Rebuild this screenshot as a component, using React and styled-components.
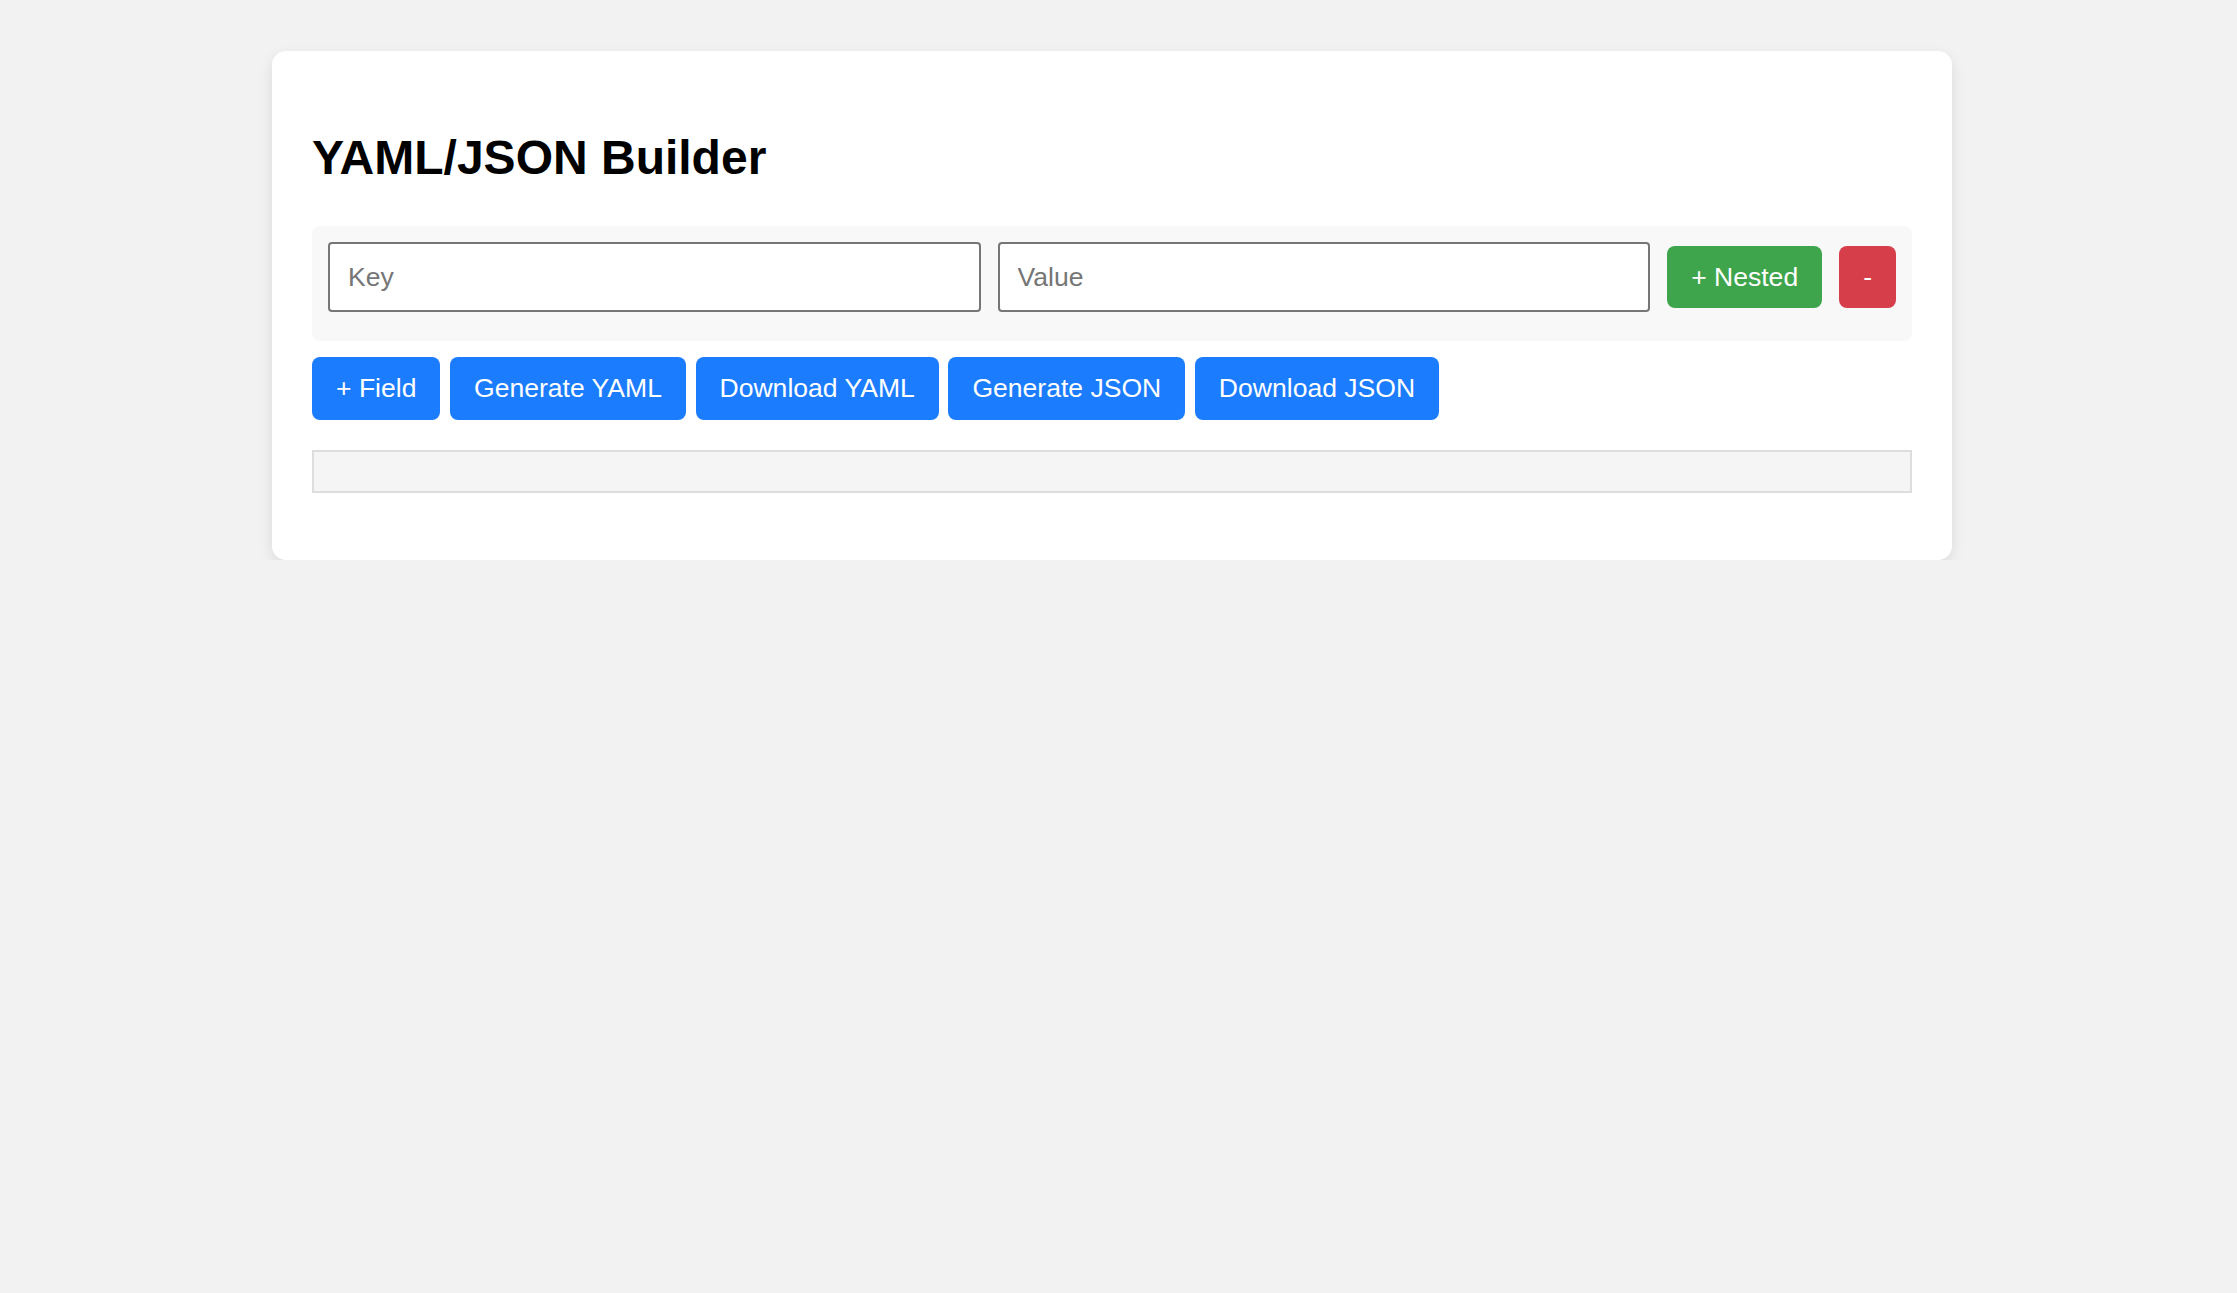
import React from "react";
import styled, { createGlobalStyle } from "styled-components";

const GlobalStyle = createGlobalStyle`
	html, body {
		margin: 0;
		background: #f2f2f2;
		font-family: "Liberation Sans", Arial, sans-serif;
	}
`;

const Page = styled.main`
	padding: 51px 13px 0 0;
`;

const Card = styled.section`
	box-sizing: border-box;
	width: 1680px;
	margin: 0 auto;
	padding: 40px;
	background: #fff;
	border-radius: 14px;
	box-shadow: 0 5px 14px rgba(0, 0, 0, 0.1);
`;

const Title = styled.h1`
	margin: 39px 0 41px;
	font-size: 48px;
	font-weight: 700;
	color: #000;
`;

const FieldRow = styled.div`
	display: flex;
	align-items: center;
	gap: 17px;
	padding: 16px 16px 29px;
	background: #f8f8f8;
	border-radius: 8px;
`;

const Input = styled.input`
	flex: 1;
	min-width: 0;
	box-sizing: border-box;
	height: 70px;
	padding: 0 18px;
	border: 2px solid #767676;
	border-radius: 4px;
	background: #fff;
	font: 26.55px "Liberation Sans", Arial, sans-serif;
	color: #222;

	&::placeholder {
		color: #767676;
	}
`;

const colors = {
	blue: "#1b7cfd",
	green: "#3fa54d",
	red: "#d63e4a",
};

const Button = styled.button`
	flex: none;
	padding: 16px 24px;
	border: none;
	border-radius: 8px;
	background: ${(p) => colors[p.$tone || "blue"]};
	color: #fff;
	font: 26.55px "Liberation Sans", Arial, sans-serif;
	line-height: 1.15;
	cursor: pointer;
`;

const Actions = styled.div`
	display: flex;
	gap: 9.6px;
	margin-top: 16px;
`;

const Output = styled.pre`
	box-sizing: border-box;
	height: 43px;
	margin: 30px 0 27px;
	padding: 0;
	background: #f5f5f5;
	border: 2px solid #dddddd;
`;

export default function App() {
	return (
		<Page>
			<GlobalStyle />
			<Card>
				<Title>YAML/JSON Builder</Title>
				<FieldRow>
					<Input placeholder="Key" />
					<Input placeholder="Value" />
					<Button $tone="green">+ Nested</Button>
					<Button $tone="red">-</Button>
				</FieldRow>
				<Actions>
					<Button>+ Field</Button>
					<Button>Generate YAML</Button>
					<Button>Download YAML</Button>
					<Button>Generate JSON</Button>
					<Button>Download JSON</Button>
				</Actions>
				<Output />
			</Card>
		</Page>
	);
}
